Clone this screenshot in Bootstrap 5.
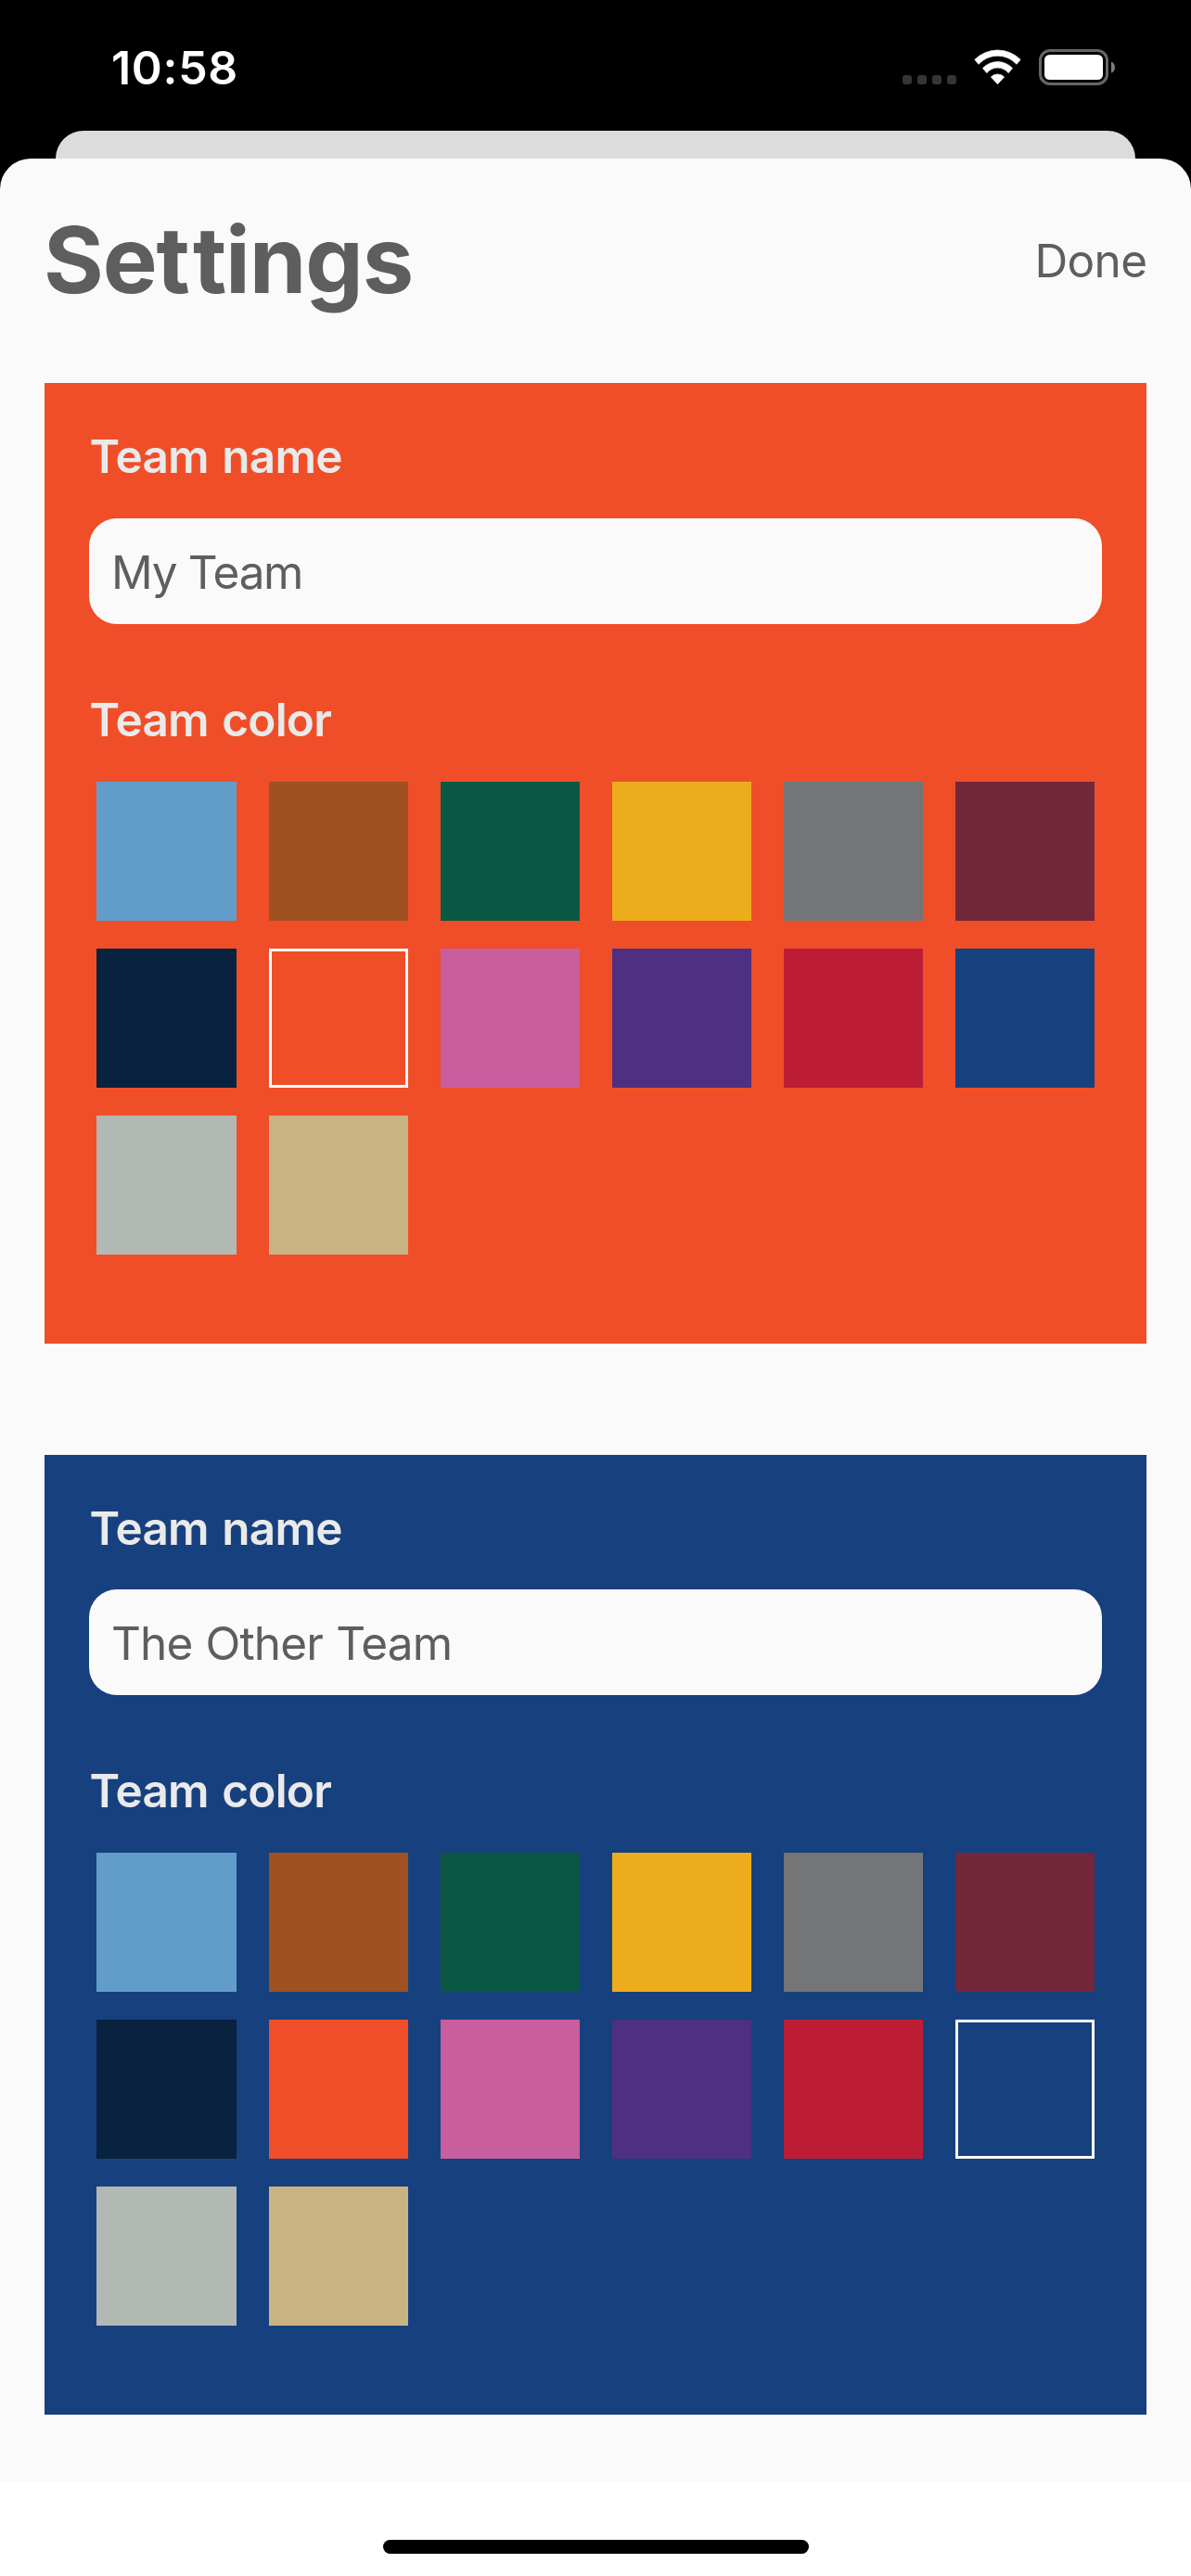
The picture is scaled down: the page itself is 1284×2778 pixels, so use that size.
<!DOCTYPE html>
<html lang="en">
<head>
<meta charset="utf-8">
<meta name="viewport" content="width=device-width, initial-scale=1">
<title>Settings</title>
<link href="https://cdn.jsdelivr.net/npm/bootstrap@5.3.0/dist/css/bootstrap.min.css" rel="stylesheet">
<style>
  body { font-family: Inter, "Liberation Sans", sans-serif; background: #000; color: #5e5e5e; }
  .screen { width: 1284px; height: 2778px; }
  .status-bar { height: 141px; padding: 43px 82px 0 120px; }
  .clock { font-size: 50px; line-height: 60px; letter-spacing: .7px; }
  .status-icons { height: 39px; margin-top: 10px; }
  .signal { margin-right: 19px; }
  .wifi { margin-right: 19px; }
  .sheet-behind { height: 30px; margin: 0 60px; background: #dcdcdc; border-radius: 30px 30px 0 0; }
  .sheet { height: 2505px; background: #fafafa; border-radius: 33px 33px 0 0; padding: 49px 48px 0; }
  .sheet-header { height: 120px; margin-bottom: 73px; }
  .sheet-title { font-size: 99px; line-height: 120px; letter-spacing: -1.100px; color: #5e5e5e; margin-left: -1px; }
  .loose { letter-spacing: 3px; }
  .done { font-size: 49.5px; line-height: 60px; letter-spacing: -.6px; padding-top: 2px; margin-right: -.5px; color: #5e5e5e; }
  .team { height: 1036px; padding: 49px 48px 0; margin-bottom: 120px; }
  .team-blue { height: 1035px; margin-bottom: 0; }
  .team-orange, .swatch-orange { background: #f04e28; }
  .team-blue, .swatch-blue { background: #17407e; }
  .team-label { font-size: 49.5px; line-height: 60px; letter-spacing: -.8px; word-spacing: 2.800px; color: #eaeaea; margin-bottom: 37px; padding-left: .5px; }
  .team-blue .name-label { margin-bottom: 36px; }
  .team-field { height: 114px; padding: 28px 24px 26px; margin-bottom: 73px; border-radius: 30px; background: #fafafa; color: #5e5e5e; font-size: 49.5px; line-height: 60px; letter-spacing: -1.300px; }
  .team-blue .team-field { letter-spacing: -.9px; word-spacing: 1.200px; }
  .swatches { display: grid; grid-template-columns: 151px repeat(5, 150px); grid-auto-rows: 150px; gap: 30px 35px; padding-left: 8px; }
  .selected { border: 3px solid #fff !important; }
  .c-sky { background: #629dca; } .c-brown { background: #9f5122; } .c-green { background: #0a5843; }
  .c-gold { background: #edac1b; } .c-gray { background: #747576; } .c-maroon { background: #72273b; }
  .c-navy { background: #082240; } .c-pink { background: #c95e9e; } .c-purple { background: #4f2f7f; }
  .c-red { background: #bc1d34; } .c-silver { background: #b2b8b4; } .c-tan { background: #cab382; }
  .home-area { height: 102px; padding-top: 63px; background: #fff; }
  .home-bar { width: 459px; height: 15px; margin-left: 413px; background: #000; border-radius: 8px; }
</style>
<script src="https://cdn.jsdelivr.net/npm/bootstrap@5.3.0/dist/js/bootstrap.bundle.min.js"></script>
</head>
<body>
<div class="screen d-flex flex-column overflow-hidden">
  <div class="status-bar d-flex justify-content-between align-items-start">
    <div class="clock text-white fw-semibold">10:58</div>
    <div class="status-icons d-flex align-items-start">
      <svg class="signal" width="58" height="39" fill="#353535"><rect y="28" width="10" height="10" rx="3"/><rect x="16" y="28" width="10" height="10" rx="3"/><rect x="32" y="28" width="10" height="10" rx="3"/><rect x="48" y="28" width="10" height="10" rx="3"/></svg>
      <svg class="wifi" width="51" height="39" viewBox="330 99 153 117" fill="#fff" stroke="#fff" stroke-width="2" stroke-linejoin="round">
        <path d="M332.500 133A104 104 0 0 1 480.500 133L468 148A83 83 0 0 0 345 148Z"/>
        <path d="M358.500 160.500A66 66 0 0 1 454.500 160.500L441.500 176A45 45 0 0 0 371.500 176Z"/>
        <path d="M385 189A30 30 0 0 1 428 189L406.500 212Z"/>
      </svg>
      <svg width="82" height="39" viewBox="0 0 82 39"><rect x="1.500" y="1.500" width="72" height="36" rx="10.500" fill="none" stroke="#666" stroke-width="3"/><rect x="6" y="6" width="63" height="27" rx="5.500" fill="#fff"/><path d="M78 13.500C80.700 14.700 82 17 82 19.700C82 22.300 80.700 24.700 78 25.800Z" fill="#7c7c7c"/></svg>
    </div>
  </div>
  <div class="sheet-behind"></div>
  <main class="sheet">
    <header class="sheet-header d-flex justify-content-between align-items-center">
      <h1 class="sheet-title fw-bold mb-0">Se<span class="loose">t</span>tings</h1>
      <a class="done text-decoration-none" href="#">Done</a>
    </header>
    <section class="team team-orange">
      <div class="team-label name-label fw-semibold">Team name</div>
      <div class="team-field form-control border-0">My Team</div>
      <div class="team-label fw-semibold">Team color</div>
      <div class="swatches">
        <div class="c-sky"></div><div class="c-brown"></div><div class="c-green"></div><div class="c-gold"></div><div class="c-gray"></div><div class="c-maroon"></div>
        <div class="c-navy"></div><div class="swatch-orange selected"></div><div class="c-pink"></div><div class="c-purple"></div><div class="c-red"></div><div class="swatch-blue"></div>
        <div class="c-silver"></div><div class="c-tan"></div>
      </div>
    </section>
    <section class="team team-blue">
      <div class="team-label name-label fw-semibold">Team name</div>
      <div class="team-field form-control border-0">The Other Team</div>
      <div class="team-label fw-semibold">Team color</div>
      <div class="swatches">
        <div class="c-sky"></div><div class="c-brown"></div><div class="c-green"></div><div class="c-gold"></div><div class="c-gray"></div><div class="c-maroon"></div>
        <div class="c-navy"></div><div class="swatch-orange"></div><div class="c-pink"></div><div class="c-purple"></div><div class="c-red"></div><div class="swatch-blue selected"></div>
        <div class="c-silver"></div><div class="c-tan"></div>
      </div>
    </section>
  </main>
  <footer class="home-area"><div class="home-bar"></div></footer>
</div>
</body>
</html>
